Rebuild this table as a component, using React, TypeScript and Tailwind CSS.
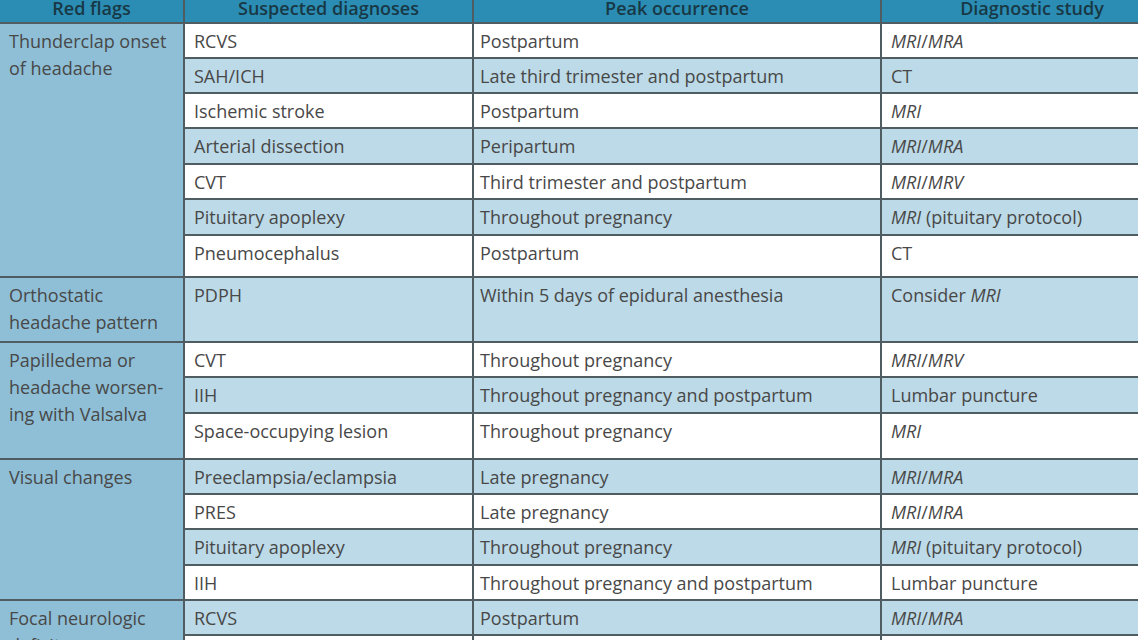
import React from 'react';

type Row = { dx: string; peak: string; study: string; h: string; light: boolean };
type Group = { flag: string[]; rows: Row[] };

// alternating stripes run across the whole table, not per group
const groups: Group[] = [
  {
    flag: ['Thunderclap onset', 'of headache'],
    rows: [
      { dx: 'RCVS', peak: 'Postpartum', study: 'MRI/MRA', h: 'h-[33px]', light: false },
      { dx: 'SAH/ICH', peak: 'Late third trimester and postpartum', study: 'CT', h: 'h-[33px]', light: true },
      { dx: 'Ischemic stroke', peak: 'Postpartum', study: 'MRI', h: 'h-[33px]', light: false },
      { dx: 'Arterial dissection', peak: 'Peripartum', study: 'MRI/MRA', h: 'h-[34px]', light: true },
      { dx: 'CVT', peak: 'Third trimester and postpartum', study: 'MRI/MRV', h: 'h-[33px]', light: false },
      { dx: 'Pituitary apoplexy', peak: 'Throughout pregnancy', study: 'MRI (pituitary protocol)', h: 'h-[34px]', light: true },
      { dx: 'Pneumocephalus', peak: 'Postpartum', study: 'CT', h: 'h-[40px]', light: false },
    ],
  },
  {
    flag: ['Orthostatic', 'headache pattern'],
    rows: [
      { dx: 'PDPH', peak: 'Within 5 days of epidural anesthesia', study: 'Consider MRI', h: 'h-[63px]', light: true },
    ],
  },
  {
    flag: ['Papilledema or', 'headache worsen-', 'ing with Valsalva'],
    rows: [
      { dx: 'CVT', peak: 'Throughout pregnancy', study: 'MRI/MRV', h: 'h-[33px]', light: false },
      { dx: 'IIH', peak: 'Throughout pregnancy and postpartum', study: 'Lumbar puncture', h: 'h-[34px]', light: true },
      { dx: 'Space-occupying lesion', peak: 'Throughout pregnancy', study: 'MRI', h: 'h-[44px]', light: false },
    ],
  },
  {
    flag: ['Visual changes'],
    rows: [
      { dx: 'Preeclampsia/eclampsia', peak: 'Late pregnancy', study: 'MRI/MRA', h: 'h-[33px]', light: true },
      { dx: 'PRES', peak: 'Late pregnancy', study: 'MRI/MRA', h: 'h-[33px]', light: false },
      { dx: 'Pituitary apoplexy', peak: 'Throughout pregnancy', study: 'MRI (pituitary protocol)', h: 'h-[34px]', light: true },
      { dx: 'IIH', peak: 'Throughout pregnancy and postpartum', study: 'Lumbar puncture', h: 'h-[33px]', light: false },
    ],
  },
  {
    flag: ['Focal neurologic', 'deficits'],
    rows: [
      { dx: 'RCVS', peak: 'Postpartum', study: 'MRI/MRA', h: 'h-[33px]', light: true },
      { dx: 'Ischemic stroke', peak: 'Postpartum', study: 'MRI', h: 'h-[33px]', light: false },
      { dx: 'CVT', peak: 'Third trimester and postpartum', study: 'MRI/MRV', h: 'h-[33px]', light: true },
    ],
  },
];

// MR* abbreviations are set in italics in the source table
const Study = ({ text }: { text: string }) => {
  const parts = text.split(/(MR[IAV])/);
  return (
    <>
      {parts.map((p, i) => (/^MR[IAV]$/.test(p) ? <i key={i}>{p}</i> : <span key={i}>{p}</span>))}
    </>
  );
};

const App = () => {
  const cell = 'align-top pt-[4px] pl-[9px] pr-2 leading-[27px]';

  return (
    <div className='w-[1138px] h-[640px] overflow-hidden bg-white'>
      <table
        className='-mt-[8px] -ml-[2px] w-[1186px] table-fixed border-separate border-spacing-[2px] bg-[#4f5c62] text-[18px] text-[#484848]'
        style={{ fontFamily: '"Open Sans", "Liberation Sans", sans-serif' }}
      >
        <colgroup>
          <col className='w-[183px]' />
          <col className='w-[287px]' />
          <col className='w-[406px]' />
          <col className='w-[300px]' />
        </colgroup>
        <thead>
          <tr className='h-[28px]'>
            {['Red flags', 'Suspected diagnoses', 'Peak occurrence', 'Diagnostic study'].map((t) => (
              <th key={t} className='bg-[#2b8db4] text-center align-top pt-[1px] leading-[27px] font-semibold text-[#183845]'>
                {t}
              </th>
            ))}
          </tr>
        </thead>
        <tbody>
          {groups.map((g) =>
            g.rows.map((r, i) => (
              <tr key={g.flag[0] + i} className={r.h}>
                {i === 0 && (
                  <td rowSpan={g.rows.length} className={`${cell} bg-[#8ebfd6]`}>
                    {g.flag.map((line) => (
                      <div key={line} className='whitespace-nowrap'>{line}</div>
                    ))}
                  </td>
                )}
                <td className={`${cell} whitespace-nowrap ${r.light ? 'bg-[#bcdae7]' : 'bg-white'}`}>{r.dx}</td>
                <td className={`${cell} !pl-[6px] whitespace-nowrap ${r.light ? 'bg-[#bcdae7]' : 'bg-white'}`}>{r.peak}</td>
                <td className={`${cell} whitespace-nowrap ${r.light ? 'bg-[#bcdae7]' : 'bg-white'}`}>
                  <Study text={r.study} />
                </td>
              </tr>
            ))
          )}
        </tbody>
      </table>
    </div>
  );
};

export default App;
